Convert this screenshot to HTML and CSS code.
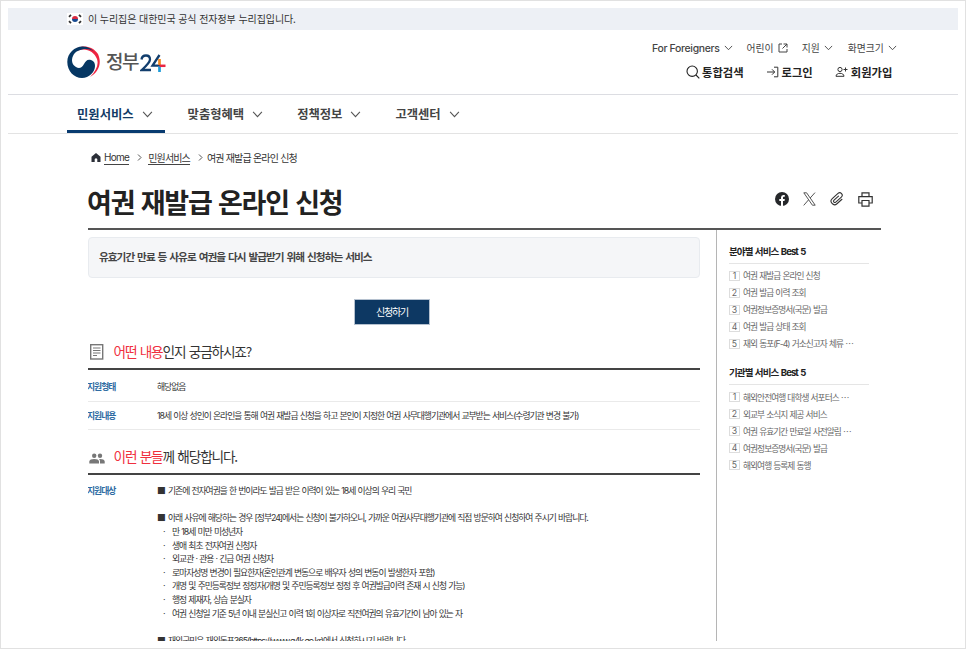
FILE: index.html
```html
<!DOCTYPE html>
<html lang="ko">
<head>
<meta charset="utf-8">
<title>여권 재발급 온라인 신청</title>
<link rel="stylesheet" href="styles.css">
</head>
<body>
<svg width="0" height="0" class="defs"><symbol id="chev" viewBox="0 0 10 6"><path d="M1 .7 5 4.9 9 .7" fill="none" stroke="currentColor" stroke-width="1"/></symbol></svg>
<div class="page">
  <div class="gov">
    <svg width="16" height="12" viewBox="0 0 16 12"><rect width="16" height="12" fill="#fff"/><path d="M5 6a3 3 0 0 1 6 0z" fill="#d8283f"/><path d="M5 6a3 3 0 0 0 6 0z" fill="#174a91"/><path d="M2 3.8 4 1.8M12 1.8l2 2M2 8.2l2 2M12 10.2l2-2" stroke="#333" stroke-width="1.8"/></svg>
    <span>이 누리집은 대한민국 공식 전자정부 누리집입니다.</span>
  </div>
  <header class="header">
    <div class="logo">
      <svg class="mark" width="33" height="33" viewBox="0 0 33 33"><path d="M10 2C16-1 26 0 31 8c4 9 1 18-8 23 6-6 9-12 7-18C27 5 18 1 10 5z" fill="#ef2340"/><path d="M16 .5C8 .2.3 7 .3 16S7 32 15 32c7 0 13-6 13-12 0-3-1-5-4-6-4-1-5 1-7 4-2 4-5 5-8 3-4-2-5-7-3-11C8 5 14 3 19 3c4 0 7 1 9 4C25 3 21 .7 16 .5z" fill="#063763"/></svg>
      <span class="logo-ko">정부</span>
      <svg class="num" width="28" height="19" viewBox="0 0 28 19"><path d="M1.500 5.500Q2 1.500 6 1.500q4 0 4 4 0 3-8.200 10.500H11" fill="none" stroke="#123e6d" stroke-width="2.300"/><path d="M19.500 1 12.500 11.700H20" fill="none" stroke="#123e6d" stroke-width="2.300"/><path d="M19.500 5v6" stroke="#f28a20" stroke-width="2.700"/><path d="M19.500 12v6" stroke="#1d9bd8" stroke-width="2.700"/><path d="M19.500 11.800h6" stroke="#e92542" stroke-width="2.500"/></svg>
    </div>
    <div class="tools">
      <div class="util">
        <span class="u1"><b class="en">For Foreigners</b><svg width="9" height="6"><use href="#chev"/></svg></span><i></i>
        <span class="u2">어린이<svg width="10" height="10" viewBox="0 0 10 10" fill="none" stroke="#444"><path d="M4 1H1v8h8V6M5.500 1H9v3.500M9 1 4.500 5.500"/></svg></span><i></i>
        <span class="u3">지원<svg width="9" height="6"><use href="#chev"/></svg></span><i></i>
        <span class="u4">화면크기<svg width="9" height="6"><use href="#chev"/></svg></span>
      </div>
      <div class="member">
        <span class="m1"><svg width="14" height="14" viewBox="0 0 14 14" fill="none" stroke="#222" stroke-width="1.100"><circle cx="6.200" cy="6.200" r="5.200"/><path d="m10 10 3.300 3.300"/></svg>통합검색</span>
        <span class="m2"><svg width="12" height="12" viewBox="0 0 12 12" fill="none" stroke="#333"><path d="M7 1.200h3.800v9.600H7M0 6h7.500M5 3.300 7.700 6 5 8.700"/></svg>로그인</span>
        <span class="m3"><svg width="13" height="12" viewBox="0 0 13 12" fill="none" stroke="#333"><circle cx="5" cy="3.500" r="2.100"/><path d="M1 10.300c0-4 8-4 8 0zM8.500 3.500h4M10.500 1.500v4"/></svg>회원가입</span>
      </div>
    </div>
  </header>
  <nav class="nav">
    <span class="on">민원서비스<svg width="11" height="7"><use href="#chev"/></svg></span>
    <span>맞춤형혜택<svg width="11" height="7"><use href="#chev"/></svg></span>
    <span>정책정보<svg width="11" height="7"><use href="#chev"/></svg></span>
    <span>고객센터<svg width="11" height="7"><use href="#chev"/></svg></span>
  </nav>
  <main class="main">
    <div class="crumb">
      <svg width="10" height="9" viewBox="0 0 10 9"><path d="M5 0 .5 3.700V9h3.200V6q1.300-1.400 2.600 0v3h3.200V3.700z" fill="#2b2f38"/></svg>
      <a class="home">Home</a><svg class="gt g1" width="5" height="7" viewBox="0 0 5 7"><path d="M1 .5 4 3.500 1 6.500" fill="none" stroke="#555"/></svg>
      <a class="svc">민원서비스</a><svg class="gt g2" width="5" height="7" viewBox="0 0 5 7"><path d="M1 .5 4 3.500 1 6.500" fill="none" stroke="#555"/></svg>
      <span>여권 재발급 온라인 신청</span>
    </div>
    <div class="titlebar">
      <h1>여권 재발급 온라인 신청</h1>
      <div class="share">
        <svg width="14" height="14" viewBox="0 0 14 14"><circle cx="7" cy="7" r="7" fill="#26282b"/><path d="M6 14V9H4.300V7H6V5.500Q6 3 8.300 3h1.500v1.800H8.700Q8 4.800 8 5.700V7h1.800l-.3 2H8v5z" fill="#fff"/></svg>
        <svg width="13" height="14" viewBox="0 0 13 14" fill="none" stroke="#444" stroke-width=".9"><path d="M.8.8h2.800l8.600 12.400H9.400zM12 .6 7.200 6M5.400 8 .7 13.400"/></svg>
        <svg width="14" height="14" viewBox="0 0 14 14" fill="none" stroke="#333" stroke-width="1.100" stroke-linecap="round"><g transform="rotate(48 7 7)"><path d="M10.500 3.500v6.700a3.500 3.500 0 0 1-7 0V2.500a2.500 2.500 0 0 1 5 0v7.500a1.300 1.300 0 0 1-2.600 0V4"/></g></svg>
        <svg width="15" height="15" viewBox="0 0 15 15" fill="none" stroke="#333" stroke-width="1.200"><path d="M4 4.500V.8h7v3.700M3.700 11H.8V4.600h13.400V11h-2.900M4 8.500h7v5.700H4z"/></svg>
      </div>
    </div>
    <div class="columns">
      <div class="content">
        <p class="summary">유효기간 만료 등 사유로 여권을 다시 발급받기 위해 신청하는 서비스</p>
        <a class="apply">신청하기</a>
        <h2><svg width="14" height="16" viewBox="0 0 14 16" fill="none" stroke="#777"><rect x=".7" y=".7" width="12" height="14.300" stroke-width="1.400"/><path d="M3 4h7.500M3 6.500h7.500M3 9h7.500M3 11.500h4"/></svg><span><em>어떤 내용</em>인지 궁금하시죠?</span></h2>
        <dl class="row r1"><dt>지원형태</dt><dd>해당없음</dd></dl>
        <dl class="row r2"><dt>지원내용</dt><dd>18세 이상 성인이 온라인을 통해 여권 재발급 신청을 하고 본인이 지정한 여권 사무대행기관에서 교부받는 서비스(수령기관 변경 불가)</dd></dl>
        <h2 class="second"><svg width="16" height="11" viewBox="0 0 16 11" fill="#777"><circle cx="5.200" cy="2.700" r="2.200"/><circle cx="11" cy="2.700" r="2.200"/><path d="M.3 10.500V8.300Q1 6 5.200 6T10 8.300v2.200zM11 10.500V8.300Q11 7 10 6q5-.3 5.700 2.300v2.200z"/></svg><span><em>이런 분들</em>께 해당합니다.</span></h2>
        <dl class="target"><dt>지원대상</dt><dd>
          <p><b>■</b>기존에 전자여권을 한 번이라도 발급 받은 이력이 있는 18세 이상의 우리 국민</p>
          <p class="gap"><b>■</b>아래 사유에 해당하는 경우 [정부24]에서는 신청이 불가하오니, 가까운 여권사무대행기관에 직접 방문하여 신청하여 주시기 바랍니다.</p>
          <ul>
            <li>만 18세 미만 미성년자</li>
            <li>생애 최초 전자여권 신청자</li>
            <li>외교관 · 관용 · 긴급 여권 신청자</li>
            <li>로마자성명 변경이 필요한자(혼인관계 변동으로 배우자 성의 변동이 발생한자 포함)</li>
            <li>개명 및 주민등록정보 정정자(개명 및 주민등록정보 정정 후 여권발급이력 존재 시 신청 가능)</li>
            <li>행정 제재자, 상습 분실자</li>
            <li>여권 신청일 기준 5년 이내 분실신고 이력 1회 이상자로 직전여권의 유효기간이 남아 있는 자</li>
          </ul>
          <p class="gap"><b>■</b>재외국민은 재외동포365(https://www.g4k.go.kr)에서 신청하시기 바랍니다.</p>
        </dd></dl>
      </div>
      <aside>
        <h3>분야별 서비스 Best 5</h3>
        <ol>
          <li><b>1</b>여권 재발급 온라인 신청</li><li><b>2</b>여권 발급 이력 조회</li><li><b>3</b>여권정보증명서(국문) 발급</li><li><b>4</b>여권 발급 상태 조회</li><li><b>5</b>재외 동포(F-4) 거소신고자 체류 <span class="dots">…</span></li>
        </ol>
        <h3>기관별 서비스 Best 5</h3>
        <ol>
          <li><b>1</b>해외안전여행 대학생 서포터스 <span class="dots">…</span></li><li><b>2</b>외교부 소식지 제공 서비스</li><li><b>3</b>여권 유효기간 만료일 사전알림 <span class="dots">…</span></li><li><b>4</b>여권정보증명서(국문) 발급</li><li><b>5</b>해외여행 등록제 동행</li>
        </ol>
      </aside>
    </div>
  </main>
</div>
</body>
</html>
```
FILE: styles.css
```css
* { box-sizing: border-box; margin: 0; padding: 0; }
body { width: 966px; height: 649px; overflow: hidden; background: #fff; font-family: "Noto Sans CJK KR", sans-serif; color: #333; white-space: nowrap; }
svg { flex: none; display: block; }
.defs { position: absolute; }
em { font-style: normal; }
.page { width: 966px; height: 649px; border: 1px solid #e1e1e1; padding: 7px; display: flex; flex-direction: column; }
.gov { flex: none; height: 22px; background: #edf0f5; padding: 0 0 1px 59px; display: flex; align-items: center; gap: 5px; font-size: 10px; letter-spacing: -.08px; }
.header { flex: none; height: 65px; border-bottom: 1px solid #dcdde2; padding: 0 62px 0 59px; display: flex; justify-content: space-between; }
.logo { display: flex; align-items: flex-start; padding-top: 16px; }
.logo-ko { font-size: 19px; line-height: 28px; letter-spacing: -1.600px; margin: 1px 0 0 6px; color: #555; font-weight: 500; }
.num { margin: 8px 0 0 2px; }
.tools { width: 244px; color: #444; }
.util { display: flex; align-items: center; height: 16px; margin-top: 10px; font-size: 9.800px; }
.util span { display: flex; align-items: center; gap: 4px; }
.util i { width: 1px; height: 12px; background: #ddd; margin: 0 6px 0 8px; }
.util .u4 { margin-left: 1px; }
.util .en { font: 500 10.400px Inter, sans-serif; letter-spacing: -.3px; }
.member { display: flex; align-items: center; height: 20px; margin-top: 6px; padding-left: 34px; font-size: 11.300px; font-weight: 700; color: #222; }
.member span { display: flex; align-items: center; gap: 2px; }
.member .m2 { margin-left: 23px; gap: 3px; }
.member .m3 { margin-left: 22px; gap: 3px; }
.nav { flex: none; height: 39px; border-bottom: 1px solid #e3e3e3; padding-left: 59px; display: flex; font-size: 12.300px; font-weight: 700; color: #444; }
.nav span { display: flex; align-items: center; gap: 8px; padding: 0 11px; margin-right: 12px; }
.nav svg { color: #555; }
.nav .on { color: #123b66; border-bottom: 3px solid #083b70; padding: 3px 12px 0 10px; }
.main { flex: 1; min-height: 0; width: 793px; margin-left: 80px; display: flex; flex-direction: column; }
.crumb { flex: none; height: 47px; padding-left: 3px; display: flex; align-items: center; font-size: 10px; letter-spacing: -.87px; word-spacing: .3px; }
.crumb a { border-bottom: 1px solid #444; line-height: 13px; }
.home { font-family: Inter, sans-serif; margin-left: 3px; letter-spacing: -.7px; font-size: 10px; }
.g1 { margin: 0 6px 0 8px; }
.g2 { margin: 0 4px 0 8px; }
.titlebar { flex: none; height: 49px; border-bottom: 2px solid #555; display: flex; justify-content: space-between; }
h1 { font-size: 27px; line-height: 42px; letter-spacing: -1.200px; margin-left: -1px; color: #222; }
.share { display: flex; align-items: center; gap: 14px; padding: 0 8px 11px 0; }
.columns { flex: 1; min-height: 0; display: flex; justify-content: space-between; overflow: hidden; }
.content { width: 612px; padding-top: 7px; }
.summary { height: 41px; line-height: 38px; padding-left: 10px; border: 1px solid #e8ebef; border-radius: 4px; background: #f5f6f8; font-size: 10.600px; letter-spacing: -.95px; word-spacing: .9px; font-weight: 700; color: #444; }
.apply { display: block; width: 76px; height: 26px; line-height: 24px; margin: 21px auto 0 266px; border: 1px solid #b5c1cf; background: #0d3863; color: #fff; font-size: 10px; letter-spacing: -1.200px; text-align: center; }
h2 { height: 45px; border-bottom: 2px solid #444; display: flex; align-items: flex-end; padding-bottom: 7px; font-size: 13.700px; font-weight: 400; letter-spacing: -1.200px; word-spacing: .8px; line-height: 20px; }
h2 svg { margin: 0 9.500px 1px 2px; }
h2 em { color: #f02f3e; }
h2.second svg { margin: 0 8.500px 2px 1px; }
dl { display: flex; font-family: Inter, "Noto Sans CJK KR", sans-serif; font-size: 8.800px; letter-spacing: -1.020px; word-spacing: .75px; line-height: 13.600px; }
dt { width: 70px; margin-left: -1px; flex: none; color: #2f6ca3; font-weight: 700; }
.row { align-items: center; border-bottom: 1px solid #eaeaea; }
.r1 { height: 32px; padding-top: 2px; }
.r2 { height: 28px; }
.target { padding-top: 9.300px; }
.target b { display: inline-block; width: 11px; font-family: "Noto Sans CJK KR", sans-serif; font-weight: 400; line-height: 1; }
.gap { margin-top: 13.600px; }
li { list-style: none; }
.target li { padding-left: 15px; position: relative; }
.target li::before { content: "·"; position: absolute; left: 6px; }
aside { width: 165px; border-left: 1px solid #b5b5b5; padding: 8px 12px; font-family: Inter, "Noto Sans CJK KR", sans-serif; }
h3 { height: 26px; line-height: 27px; border-bottom: 1px solid #e5e5e5; font-size: 9.500px; letter-spacing: -.9px; word-spacing: 1px; color: #222; }
ol { padding-top: 3px; margin-bottom: 7px; color: #666; font-size: 8.700px; letter-spacing: -.95px; word-spacing: .6px; }
ol li { height: 17.100px; display: flex; align-items: center; white-space: pre; }
ol b { width: 11px; height: 10px; border: 1px solid #ddd; margin-right: 3px; line-height: 8px; text-align: center; font-weight: 400; letter-spacing: 0; }
.dots { font-family: "Noto Sans CJK KR", sans-serif; }
```
